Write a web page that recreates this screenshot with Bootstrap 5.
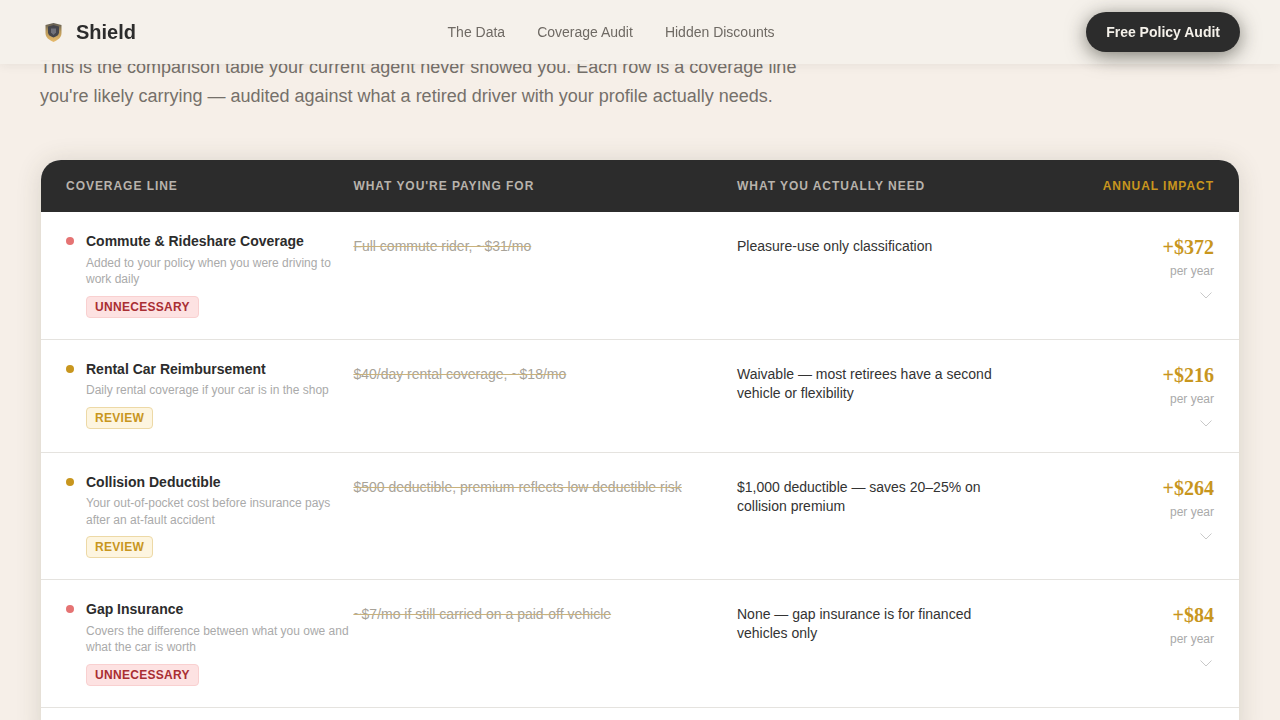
<!doctype html>
<html lang="en">
<head>
<meta charset="utf-8">
<title>Shield</title>
<link rel="stylesheet" href="https://cdn.jsdelivr.net/npm/bootstrap@5.3.0/dist/css/bootstrap.min.css">
<style>
html,body{height:720px;overflow:hidden}
body{background:#f6efe8;font-family:"Liberation Sans",Arial,sans-serif;color:#2c2c2c}
.topbar{position:fixed;top:0;left:0;right:0;height:64px;background:rgba(245,241,234,.97);box-shadow:0 1px 10px rgba(44,44,44,.08);padding:0 40px;z-index:10}
.brandname{font-size:20px;font-weight:700;color:#2c2c2c;line-height:1}
.navlinks{gap:32px}
.navlinks a{font-size:14px;color:#6f6a64;text-decoration:none}
.auditbtn{background:#2c2c2c;color:#f5f1ea;font-size:14px;font-weight:700;border-radius:20px;padding:0 20px;height:40px;line-height:40px;border:0;box-shadow:0 4px 20px rgba(44,44,34,.6)}
.pagewrap{padding:53px 41px 0 40px}
.introtext{font-size:18px;line-height:29px;color:#75706a;margin:0 0 49px;max-width:800px}
.audittable{background:#fff;border-radius:20px;overflow:hidden;margin-left:1px;box-shadow:0 2px 26px rgba(60,60,40,.16)}
.tablehead,.tablerow{display:grid;grid-template-columns:287.4px 383.6px 1fr 214px;padding:0 25px}
.tablehead{background:#2c2c2c;height:52px;align-items:center;font-size:12px;font-weight:700;letter-spacing:.96px;color:#b8b3ac}
.headgold{color:#c8961e;text-align:right}
.tablerow{border-bottom:1px solid #e5e3df;font-size:14px}
.linecell{display:flex;gap:12px;padding-top:21px;padding-bottom:20.7px}
.statusdot{width:8px;height:8px;border-radius:50%;margin-top:4px;flex:none}
.dotred{background:#e57373}
.dotgold{background:#c8961e}
.linetitle{font-size:14px;font-weight:700;line-height:16px;color:#2c2c2c}
.linedesc{font-size:12px;line-height:16.8px;color:#aaa;margin-top:5.5px;margin-right:-2px}
.flagtag{display:inline-block;font-size:12px;font-weight:700;letter-spacing:.3px;line-height:20px;padding:0 8px;border-radius:4px;margin-top:7.8px;border:1px solid}
.flagred{background:#fde2e2;color:#a92e33;border-color:#f9d0d0}
.flaggold{background:#fdf5e0;color:#c8961e;border-color:#edd9a6}
.paycell{padding-top:25px;color:#a8a398;text-decoration:line-through;text-decoration-color:#c9b27c;line-height:19px}
.needcell{padding-top:25px;line-height:19px;max-width:262px;color:#333}
.impactcell{padding-top:23px;padding-bottom:25px;text-align:right}
.impactnum{font-family:"Liberation Serif","Times New Roman",serif;font-size:20px;font-weight:700;color:#c8961e;line-height:24px}
.impactunit{font-size:12px;color:#aaa;line-height:14px;margin-top:5px}
.chevronmark{display:block;margin:14px 2px 0 auto}
.tailspace{height:40px}
</style>
</head>
<body>
<header class="topbar d-flex align-items-center justify-content-between">
  <div class="d-flex align-items-center gap-2">
    <svg width="28" height="24" viewBox="0 0 28 24" aria-hidden="true">
      <defs><linearGradient id="rim" x1="0" y1="0" x2="0" y2="1"><stop offset="0" stop-color="#5c5a54"/><stop offset=".45" stop-color="#b8985a"/><stop offset="1" stop-color="#e8bb6c"/></linearGradient></defs>
      <path d="M5.500 5 L13.500 3 L21.500 5 V13 C21.500 18 17.500 20 13.500 22 C9.500 20 5.500 18 5.500 13 Z" fill="url(#rim)"/>
      <path d="M8 6.500 L13.500 5 L19 6.500 V12.500 C19 14.500 17 16.500 13.500 17.500 C10 16.500 8 14.500 8 12.500 Z" fill="#45464c"/>
      <path d="M11 8.500 H16 V12.500 L13.500 15 L11 12.500 Z" fill="#70717a"/>
    </svg>
    <span class="brandname">Shield</span>
  </div>
  <nav class="d-flex navlinks">
    <a href="#">The Data</a>
    <a href="#">Coverage Audit</a>
    <a href="#">Hidden Discounts</a>
  </nav>
  <button class="auditbtn" type="button">Free Policy Audit</button>
</header>
<main class="pagewrap">
  <p class="introtext">This is the comparison table your current agent never showed you. Each row is a coverage line you're likely carrying — audited against what a retired driver with your profile actually needs.</p>
  <section class="audittable">
    <div class="tablehead">
      <div>COVERAGE LINE</div>
      <div>WHAT YOU'RE PAYING FOR</div>
      <div>WHAT YOU ACTUALLY NEED</div>
      <div class="headgold">ANNUAL IMPACT</div>
    </div>
    <div class="tablerow">
      <div class="linecell"><span class="statusdot dotred"></span><div><div class="linetitle">Commute &amp; Rideshare Coverage</div><div class="linedesc">Added to your policy when you were driving to work daily</div><span class="flagtag flagred">UNNECESSARY</span></div></div>
      <div class="paycell">Full commute rider, ~$31/mo</div>
      <div class="needcell">Pleasure-use only classification</div>
      <div class="impactcell"><div class="impactnum">+$372</div><div class="impactunit">per year</div><svg class="chevronmark" width="12" height="7" viewBox="0 0 12 7"><path d="M.5.5 6 6 11.500.5" fill="none" stroke="#c9c9c9"/></svg></div>
    </div>
    <div class="tablerow">
      <div class="linecell"><span class="statusdot dotgold"></span><div><div class="linetitle">Rental Car Reimbursement</div><div class="linedesc">Daily rental coverage if your car is in the shop</div><span class="flagtag flaggold">REVIEW</span></div></div>
      <div class="paycell">$40/day rental coverage, ~$18/mo</div>
      <div class="needcell">Waivable — most retirees have a second vehicle or flexibility</div>
      <div class="impactcell"><div class="impactnum">+$216</div><div class="impactunit">per year</div><svg class="chevronmark" width="12" height="7" viewBox="0 0 12 7"><path d="M.5.5 6 6 11.500.5" fill="none" stroke="#c9c9c9"/></svg></div>
    </div>
    <div class="tablerow">
      <div class="linecell"><span class="statusdot dotgold"></span><div><div class="linetitle">Collision Deductible</div><div class="linedesc">Your out-of-pocket cost before insurance pays after an at-fault accident</div><span class="flagtag flaggold">REVIEW</span></div></div>
      <div class="paycell">$500 deductible, premium reflects low deductible risk</div>
      <div class="needcell">$1,000 deductible — saves 20–25% on collision premium</div>
      <div class="impactcell"><div class="impactnum">+$264</div><div class="impactunit">per year</div><svg class="chevronmark" width="12" height="7" viewBox="0 0 12 7"><path d="M.5.5 6 6 11.500.5" fill="none" stroke="#c9c9c9"/></svg></div>
    </div>
    <div class="tablerow">
      <div class="linecell"><span class="statusdot dotred"></span><div><div class="linetitle">Gap Insurance</div><div class="linedesc">Covers the difference between what you owe and what the car is worth</div><span class="flagtag flagred">UNNECESSARY</span></div></div>
      <div class="paycell">~$7/mo if still carried on a paid-off vehicle</div>
      <div class="needcell">None — gap insurance is for financed vehicles only</div>
      <div class="impactcell"><div class="impactnum">+$84</div><div class="impactunit">per year</div><svg class="chevronmark" width="12" height="7" viewBox="0 0 12 7"><path d="M.5.5 6 6 11.500.5" fill="none" stroke="#c9c9c9"/></svg></div>
    </div>
    <div class="tailspace"></div>
  </section>
</main>
<script src="https://cdn.jsdelivr.net/npm/bootstrap@5.3.0/dist/js/bootstrap.bundle.min.js"></script>
</body>
</html>
